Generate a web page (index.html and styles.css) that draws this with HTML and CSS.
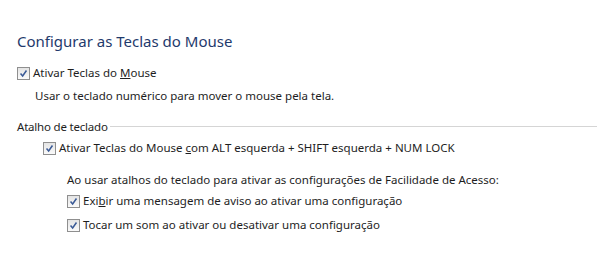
FILE: index.html
```html
<!DOCTYPE html>
<html lang="pt-BR">
<head>
<meta charset="utf-8">
<link rel="stylesheet" href="styles.css">
</head>
<body>
<div class="page">
  <h1 class="title">Configurar as Teclas do Mouse</h1>
  <label class="check lvl0"><span class="box"><svg viewBox="0 0 13 13" width="13" height="13"><path d="M3 6.5 L5.5 9.5 L10 3" fill="none" stroke="#3a5a96" stroke-width="1.8"/></svg></span><span>Ativar Teclas do <u>M</u>ouse</span></label>
  <p class="desc">Usar o teclado numérico para mover o mouse pela tela.</p>
  <div class="group">
    <span class="group-label">Atalho de teclado</span>
    <span class="rule"></span>
  </div>
  <label class="check lvl1"><span class="box"><svg viewBox="0 0 13 13" width="13" height="13"><path d="M3 6.5 L5.5 9.5 L10 3" fill="none" stroke="#3a5a96" stroke-width="1.8"/></svg></span><span>Ativar Teclas do Mouse <u>c</u>om ALT esquerda + SHIFT esquerda + NUM LOCK</span></label>
  <p class="note">Ao usar atalhos do teclado para ativar as configurações de Facilidade de Acesso:</p>
  <label class="check lvl2 first"><span class="box"><svg viewBox="0 0 13 13" width="13" height="13"><path d="M3 6.5 L5.5 9.5 L10 3" fill="none" stroke="#3a5a96" stroke-width="1.8"/></svg></span><span>Exi<u>b</u>ir uma mensagem de aviso ao ativar uma configuração</span></label>
  <label class="check lvl2"><span class="box"><svg viewBox="0 0 13 13" width="13" height="13"><path d="M3 6.5 L5.5 9.5 L10 3" fill="none" stroke="#3a5a96" stroke-width="1.8"/></svg></span><span>Tocar um som ao ativar ou desativar uma confi<u>g</u>uração</span></label>
</div>
</body>
</html>
```
FILE: styles.css
```css
html, body {
  margin: 0;
  padding: 0;
  background: #fff;
}
.page {
  width: 597px;
  height: 259px;
  overflow: hidden;
  padding: 0 0 0 17px;
  box-sizing: border-box;
  font-family: "Noto Sans", "Open Sans", sans-serif;
  font-size: 11.5px;
  color: #1e1e1e;
}
.title {
  margin: 0;
  padding-top: 31px;
  font-weight: normal;
  font-size: 15px;
  line-height: 20px;
  color: #1f3a6c;
}
.check {
  display: flex;
  align-items: center;
  gap: 3px;
  height: 16px;
  line-height: 16px;
}
.check u { text-decoration: underline; }
.box {
  width: 11px;
  height: 11px;
  border: 1px solid #8f8f8f;
  background: linear-gradient(#e4e4e4, #fafafa);
  display: flex;
  flex: none;
}
.box svg { width: 11px; height: 11px; }
.lvl0 { margin-top: 14px; }
.lvl1 { margin-left: 26px; margin-top: 6px; }
.lvl2 { margin-left: 50px; margin-top: 8px; }
.lvl2.first { margin-top: 5px; }
.desc {
  margin: 7px 0 0 18px;
  line-height: 16px;
}
.group {
  display: flex;
  align-items: center;
  margin-top: 14px;
  height: 16px;
}
.group-label { flex: none; letter-spacing: -0.2px; }
.rule {
  flex: 1;
  height: 1px;
  background: #d5d5d5;
  margin-left: 2px;
}
.note {
  margin: 16px 0 0 50px;
  line-height: 16px;
}
```
